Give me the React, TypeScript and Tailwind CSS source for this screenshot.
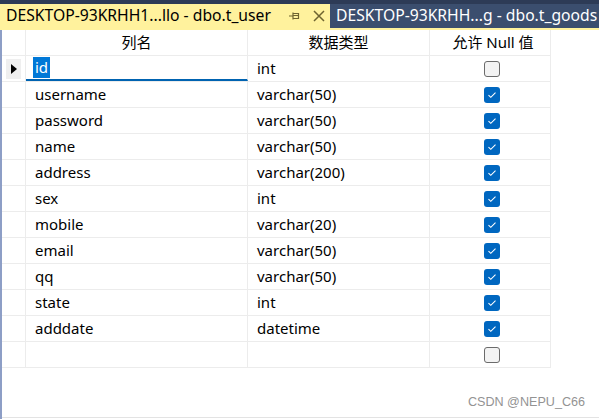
import { CSSProperties } from 'react';

type Col = { name: string; type: string; nullable: boolean };

const columns: Col[] = [
  { name: 'id', type: 'int', nullable: false },
  { name: 'username', type: 'varchar(50)', nullable: true },
  { name: 'password', type: 'varchar(50)', nullable: true },
  { name: 'name', type: 'varchar(50)', nullable: true },
  { name: 'address', type: 'varchar(200)', nullable: true },
  { name: 'sex', type: 'int', nullable: true },
  { name: 'mobile', type: 'varchar(20)', nullable: true },
  { name: 'email', type: 'varchar(50)', nullable: true },
  { name: 'qq', type: 'varchar(50)', nullable: true },
  { name: 'state', type: 'int', nullable: true },
  { name: 'adddate', type: 'datetime', nullable: true },
];

const font: CSSProperties = {
  fontFamily: '"Noto Sans", "Noto Sans CJK SC", sans-serif',
};

function CheckBox({ checked }: { checked: boolean }) {
  if (!checked) {
    return <div className="w-4 h-4 rounded-[3px] border border-[#6b6b6b] bg-[#f3f3f3]" />;
  }
  return (
    <div className="w-4 h-4 rounded-[3px] bg-[#0067c0] flex items-center justify-center">
      <svg width="10" height="8" viewBox="0 0 10 8" fill="none">
        <path d="M1.5 4.2 L3.8 6.3 L8.5 1.7" stroke="white" strokeWidth="1.1" />
      </svg>
    </div>
  );
}

function Row({ col, index }: { col?: Col; index: number }) {
  const current = index === 0;
  return (
    <div className="grid grid-cols-[24px_222px_182px_121px] h-[26px] border-b border-[#ececec]">
      <div className="border-r border-[#ececec] flex items-center justify-center">
        {current && (
          <div className="w-[15px] h-[20px] bg-[#efefef] flex items-center justify-center">
            <svg width="6" height="10" viewBox="0 0 6 10">
              <path d="M0 0 L6 5 L0 10 Z" fill="black" />
            </svg>
          </div>
        )}
      </div>
      <div
        className={`border-r border-[#ececec] flex items-center pl-[7px] ${
          current ? 'border-b-2 border-b-[#0063b1]' : ''
        }`}
      >
        {col && (
          <span className={current ? 'bg-[#0078d7] text-white px-[2px] leading-[21px]' : 'px-[2px]'}>
            {col.name}
          </span>
        )}
      </div>
      <div className="border-r border-[#ececec] flex items-center pl-[9px]">{col?.type}</div>
      <div className="border-r border-[#ececec] flex items-center justify-center pl-[3px]">
        <CheckBox checked={col ? col.nullable : false} />
      </div>
    </div>
  );
}

export default function App() {
  return (
    <div className="w-[599px] h-[419px] bg-white flex flex-col overflow-hidden text-[15px] text-black" style={font}>
      {/* tab strip */}
      <div className="h-[28px] bg-[#2d3b56] flex items-end shrink-0">
        <div className="h-[24px] w-[330px] bg-[#fff29d] flex items-center pl-[6px] shrink-0">
          <span className="whitespace-nowrap text-[15.7px]">DESKTOP-93KRHH1...llo - dbo.t_user</span>
          <svg className="ml-[17px]" width="12" height="12" viewBox="0 0 12 12" fill="none">
            <path d="M1 6 H5 M5 2.5 V9.5 M5 3.5 H10.5 V8.5 H5 M5 5.5 H10.5" stroke="#6e6430" strokeWidth="1.2" />
          </svg>
          <svg className="ml-[13px]" width="12" height="12" viewBox="0 0 12 12" fill="none">
            <path d="M1 1 L11 11 M11 1 L1 11" stroke="#6e6430" strokeWidth="1.5" />
          </svg>
        </div>
        <div className="h-[24px] flex-1 bg-[#3b4e6e] flex items-center pl-[6px] overflow-hidden">
          <span className="whitespace-nowrap text-white text-[15.7px]">DESKTOP-93KRHH...g - dbo.t_goods</span>
        </div>
      </div>
      <div className="h-[2px] bg-[#fff29d] shrink-0" />

      <div className="flex-1 flex min-h-0">
        <div className="w-[2px] bg-[#8d9ec6] shrink-0" />
        <div className="flex-1 flex flex-col">
          <div className="w-[549px]">
            <div className="grid grid-cols-[24px_222px_182px_121px] h-[26px] border-b border-[#ececec]">
              <div className="border-r border-[#ececec]" />
              <div className="border-r border-[#ececec] flex items-center justify-center">列名</div>
              <div className="border-r border-[#ececec] flex items-center justify-center">数据类型</div>
              <div className="border-r border-[#ececec] flex items-center justify-center pl-[6px]">允许 Null 值</div>
            </div>
            {columns.map((c, i) => (
              <Row key={c.name} col={c} index={i} />
            ))}
            <Row index={-1} />
          </div>
          <div className="flex-1" />
          <div className="flex justify-end pr-[14px] pb-[5px]">
            <span className="text-[12.6px] text-[#939393]" style={{ fontFamily: '"Liberation Sans", Arial, sans-serif' }}>
              CSDN @NEPU_C66
            </span>
          </div>
          <div className="h-[2px] border-t border-[#e3e3e3]" />
        </div>
      </div>
    </div>
  );
}
